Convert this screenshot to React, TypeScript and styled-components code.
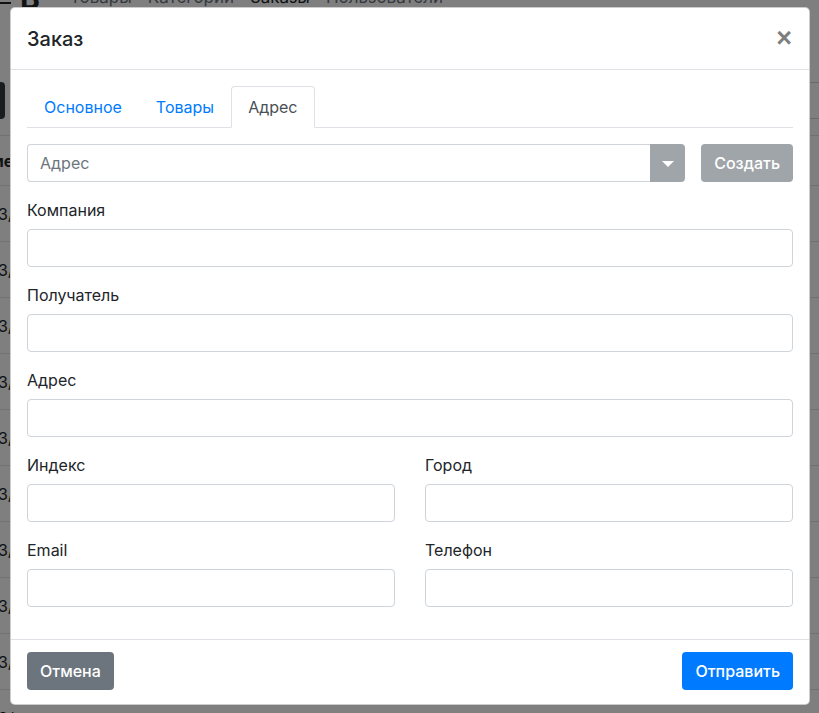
import React from "react";
import styled, { createGlobalStyle } from "styled-components";

const Global = createGlobalStyle`
  html, body { margin: 0; padding: 0; }
  body {
    font-family: Inter, "Noto Sans", "Liberation Sans", sans-serif;
    font-size: 16px;
    line-height: 1.5;
    color: #212529;
    background: #fff;
    overflow: hidden;
  }
  * { box-sizing: border-box; }
`;

/* ---------- background page ---------- */
const Page = styled.div`
  position: fixed;
  inset: 0;
  background: #fff;
  overflow: hidden;
`;

const PageInner = styled.div`
  margin-top: -22px;
  margin-left: -40px;
  width: 900px;
  display: flex;
  flex-direction: column;
`;

const Navbar = styled.nav`
  height: 40px;
  display: flex;
  align-items: center;
  gap: 16px;
  padding-left: 40px;
`;

const Brand = styled.div`
  display: flex;
  align-items: center;
  gap: 9px;
  font-size: 30px;
  font-weight: 700;
  color: #212529;
  margin-right: 14px;
`;

const Burger = styled.span`
  display: inline-flex;
  flex-direction: column;
  gap: 3px;
  & > i { display: block; width: 11px; height: 2px; background: #212529; }
`;

const NavLink = styled.span<{ $active?: boolean }>`
  font-size: 17px;
  color: ${(p) => (p.$active ? "#212529" : "#6c757d")};
`;

const Toolbar = styled.div`
  margin-top: 64px;
  height: 37px;
  display: flex;
  gap: 20px;
`;

const DarkButton = styled.div`
  width: 45px;
  background: #343a40;
  border-radius: 4px;
`;

const Search = styled.div`
  flex: 1;
  border: 1px solid #ced4da;
  border-radius: 4px;
`;

const Table = styled.div`
  margin-top: 16px;
  border-top: 1px solid #dee2e6;
`;

const TRow = styled.div<{ $head?: boolean }>`
  height: ${(p) => (p.$head ? 50 : 56)}px;
  border-bottom: 1px solid #dee2e6;
  display: flex;
  align-items: center;
  padding-left: ${(p) => (p.$head ? 9 : 28)}px;
  font-weight: ${(p) => (p.$head ? 700 : 400)};
  font-size: 16px;
  color: #212529;
`;

const Backdrop = styled.div`
  position: fixed;
  inset: 0;
  background: rgba(0, 0, 0, 0.5);
`;

/* ---------- modal ---------- */
const Modal = styled.div`
  position: fixed;
  left: 10px;
  top: 7px;
  width: 800px;
  background: #fff;
  border: 1px solid rgba(0, 0, 0, 0.2);
  border-radius: 5px;
  display: flex;
  flex-direction: column;
  overflow: hidden;
`;

const Header = styled.div`
  display: flex;
  align-items: center;
  justify-content: space-between;
  padding: 16px 16px 15px;
  border-bottom: 1px solid #dee2e6;
`;

const Title = styled.h5`
  margin: 0;
  padding-top: 1px;
  font-size: 20px;
  font-weight: 500;
  line-height: 29px;
  color: #212529;
`;

const Close = styled.button`
  border: 0;
  background: none;
  padding: 0;
  margin-right: 1px;
  margin-top: -2px;
  font-family: "Liberation Sans", Arial, sans-serif;
  font-size: 27px;
  font-weight: 700;
  line-height: 1;
  color: #000;
  opacity: 0.5;
  cursor: pointer;
`;

const Body = styled.div`
  padding: 16px;
`;

const Tabs = styled.ul`
  list-style: none;
  margin: 0;
  padding: 0;
  display: flex;
  border-bottom: 1px solid #dee2e6;
`;

const Tab = styled.li<{ $active?: boolean }>`
  margin-bottom: -1px;
  padding: 8px 16px;
  border: 1px solid transparent;
  border-top-left-radius: 4px;
  border-top-right-radius: 4px;
  color: ${(p) => (p.$active ? "#495057" : "#007bff")};
  background: ${(p) => (p.$active ? "#fff" : "transparent")};
  border-color: ${(p) => (p.$active ? "#dee2e6 #dee2e6 #fff" : "transparent")};
  cursor: pointer;
`;

const PickRow = styled.div`
  margin-top: 16px;
  margin-bottom: 16px;
  display: flex;
  gap: 16px;
`;

const SelectBox = styled.div`
  flex: 1;
  display: flex;
  height: 38px;
`;

const SelectInput = styled.div`
  flex: 1;
  border: 1px solid #ced4da;
  border-right: 0;
  border-radius: 4px 0 0 4px;
  padding: 6px 12px;
  color: #6c757d;
`;

const Caret = styled.div`
  width: 35px;
  background: #a0a5aa;
  border-radius: 0 4px 4px 0;
  display: flex;
  align-items: center;
  justify-content: center;
  &::after {
    content: "";
    border-left: 6px solid transparent;
    border-right: 6px solid transparent;
    border-top: 6px solid #fff;
    margin-top: 1px;
  }
`;

const Button = styled.button<{ $variant: "primary" | "secondary" | "disabled" }>`
  height: 38px;
  padding: 6px 12px;
  border: 1px solid transparent;
  border-radius: 4px;
  font-family: inherit;
  font-size: 16px;
  line-height: 1.5;
  color: #fff;
  font-weight: 500;
  background: ${(p) =>
    p.$variant === "primary" ? "#007bff" : p.$variant === "secondary" ? "#6c757d" : "#a0a5aa"};
`;

const Group = styled.div`
  margin-bottom: 16px;
`;

const Label = styled.label`
  display: block;
  margin-bottom: 8px;
  padding-top: 2px;
  line-height: 21px;
  color: #212529;
`;

const Input = styled.div`
  height: 38px;
  border: 1px solid #ced4da;
  border-radius: 4px;
  background: #fff;
`;

const Cols = styled.div`
  display: grid;
  grid-template-columns: 1fr 1fr;
  column-gap: 30px;
`;

const Footer = styled.div`
  display: flex;
  justify-content: space-between;
  align-items: center;
  padding: 12px 16px 14px;
  border-top: 1px solid #dee2e6;
`;

const Field = ({ label }: { label: string }) => (
  <Group>
    <Label>{label}</Label>
    <Input />
  </Group>
);

export default function App() {
  const rows = Array.from({ length: 10 });
  return (
    <>
      <Global />
      <Page>
        <PageInner>
          <Navbar>
            <Brand>
              <Burger>
                <i />
                <i />
                <i />
              </Burger>
              B
            </Brand>
            <NavLink>Товары</NavLink>
            <NavLink>Категории</NavLink>
            <NavLink $active>Заказы</NavLink>
            <NavLink>Пользователи</NavLink>
          </Navbar>
          <Toolbar>
            <DarkButton />
            <Search />
          </Toolbar>
          <Table>
            <TRow $head>Номер</TRow>
            {rows.map((_, i) => (
              <TRow key={i}>03/</TRow>
            ))}
          </Table>
        </PageInner>
      </Page>
      <Backdrop />
      <Modal>
        <Header>
          <Title>Заказ</Title>
          <Close aria-label="Close">×</Close>
        </Header>
        <Body>
          <Tabs>
            <Tab>Основное</Tab>
            <Tab>Товары</Tab>
            <Tab $active>Адрес</Tab>
          </Tabs>
          <PickRow>
            <SelectBox>
              <SelectInput>Адрес</SelectInput>
              <Caret />
            </SelectBox>
            <Button $variant="disabled">Создать</Button>
          </PickRow>
          <Field label="Компания" />
          <Field label="Получатель" />
          <Field label="Адрес" />
          <Cols>
            <Field label="Индекс" />
            <Field label="Город" />
            <Field label="Email" />
            <Field label="Телефон" />
          </Cols>
        </Body>
        <Footer>
          <Button $variant="secondary">Отмена</Button>
          <Button $variant="primary">Отправить</Button>
        </Footer>
      </Modal>
    </>
  );
}
